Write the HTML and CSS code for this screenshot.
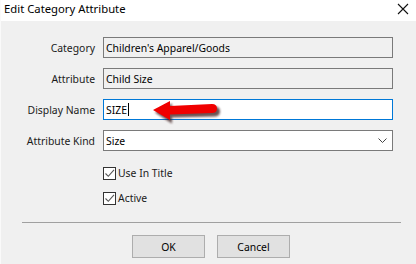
FILE: index.html
```html
<!DOCTYPE html>
<html lang="en">
<head>
  <meta charset="UTF-8" />
  <title>Edit Category Attribute</title>
  <link rel="stylesheet" href="styles.css">
</head>
<body>
  <div class="window">
    <div class="titlebar">
      <span class="title">Edit Category Attribute</span>
      <svg class="close" width="12" height="12" viewBox="0 0 12 12">
        <path d="M1 1 L11 11 M11 1 L1 11" stroke="#111" stroke-width="1.1" fill="none"/>
      </svg>
    </div>

    <div class="content">
      <div class="form">
        <label class="lbl">Category</label>
        <div class="field readonly">Children's Apparel/Goods</div>

        <label class="lbl">Attribute</label>
        <div class="field readonly">Child Size</div>

        <label class="lbl">Display Name</label>
        <div class="field active-field">SIZE<span class="caret"></span></div>

        <label class="lbl">Attribute Kind</label>
        <div class="field select">
          <span>Size</span>
          <svg class="chev" width="9" height="5" viewBox="0 0 9 5">
            <path d="M0.5 0.5 L4.5 4.5 L8.5 0.5" stroke="#444" stroke-width="1" fill="none"/>
          </svg>
        </div>
      </div>

      <div class="checks">
        <div class="check">
          <span class="box">
            <svg width="11" height="11" viewBox="0 0 11 11"><path d="M1.5 5.5 L4.3 8.3 L10 1.8" stroke="#555" stroke-width="1.1" fill="none"/></svg>
          </span>
          Use In Title
        </div>
        <div class="check">
          <span class="box">
            <svg width="11" height="11" viewBox="0 0 11 11"><path d="M1.5 5.5 L4.3 8.3 L10 1.8" stroke="#555" stroke-width="1.1" fill="none"/></svg>
          </span>
          Active
        </div>
      </div>

      <hr class="sep">

      <div class="buttons">
        <button class="btn">OK</button>
        <button class="btn">Cancel</button>
      </div>
    </div>

    <!-- annotation arrow -->
    <svg class="arrow" width="80" height="32" viewBox="0 0 80 32">
      <defs>
        <filter id="blur" x="-20%" y="-40%" width="140%" height="180%">
          <feGaussianBlur stdDeviation="1.2"/>
        </filter>
      </defs>
      <path d="M4 12 L21 3 L21 8 L63 6 Q69 6 69 11 Q69 16 63 16 L21 17 L21 23 Z" fill="#3a1a1a" opacity="0.75" filter="url(#blur)" transform="translate(2 2.5)"/>
      <path d="M4 12 L21 3 L21 8 L63 6 Q68 6 68 10.5 Q68 15 63 15 L21 16.5 L21 22 Z" fill="#f00000"/>
    </svg>
  </div>
</body>
</html>
```

FILE: styles.css
```css
body {
  margin: 0;
  font-family: "Noto Sans", "Segoe UI", sans-serif;
  font-size: 10.4px;
  color: #000;
  background: #f0f0f0;
}
.window {
  position: relative;
  width: 416px;
  height: 264px;
  background: #f0f0f0;
  border-left: 1px solid #fafafa;
  box-sizing: border-box;
  overflow: hidden;
}
.titlebar {
  height: 21px;
  background: #fff;
  display: flex;
  align-items: center;
  justify-content: space-between;
  padding: 0 7px 0 3px;
}
.title {
  font-size: 11.3px;
  color: #000;
  margin-top: -4px;
}
.close {
  margin-top: -4px;
}
.content {
  padding-top: 16px;
}
.form {
  display: grid;
  grid-template-columns: 94px 290px;
  column-gap: 8px;
  row-gap: 10px;
  grid-auto-rows: 21px;
}
.lbl {
  text-align: right;
  align-self: center;
  color: #1a1a1a;
}
.field {
  box-sizing: border-box;
  height: 21px;
  border: 1px solid #7a7a7a;
  padding: 0 2px;
  display: flex;
  align-items: center;
  white-space: nowrap;
  background: #fff;
}
.field.readonly {
  background: #f0f0f0;
}
.field.active-field {
  border-color: #0078d7;
}
.caret {
  display: inline-block;
  width: 1px;
  height: 13px;
  background: #000;
  margin-left: 1px;
}
.field.select {
  justify-content: space-between;
  padding-right: 5px;
}
.checks {
  padding-left: 102px;
  padding-top: 15px;
  display: flex;
  flex-direction: column;
  gap: 11px;
}
.check {
  display: flex;
  align-items: center;
  gap: 2px;
  height: 14px;
  color: #1a1a1a;
}
.box {
  box-sizing: border-box;
  width: 13px;
  height: 13px;
  border: 1px solid #333;
  background: #fff;
  display: flex;
  align-items: center;
  justify-content: center;
}
.sep {
  margin: 17px 15px 0 21px;
  border: none;
  border-top: 1px solid #a0a0a0;
  height: 0;
}
.buttons {
  display: flex;
  gap: 12px;
  padding-left: 131px;
  padding-top: 12px;
}
.btn {
  box-sizing: border-box;
  width: 73px;
  height: 23px;
  background: #e1e1e1;
  border: 1px solid #adadad;
  font-family: "Noto Sans", "Segoe UI", sans-serif;
  font-size: 10.4px;
  color: #000;
  padding: 0;
}
.arrow {
  position: absolute;
  left: 148px;
  top: 98px;
}
```
